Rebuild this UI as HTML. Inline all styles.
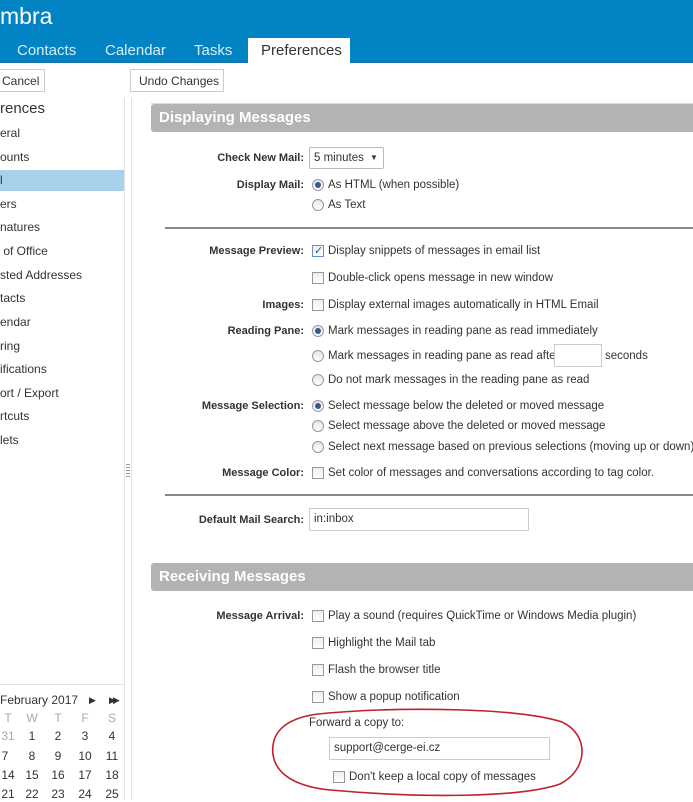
<!DOCTYPE html>
<html><head><meta charset="utf-8"><style>
*{margin:0;padding:0;box-sizing:border-box}
body{width:693px;height:800px;overflow:hidden;background:#fff;font-family:"Liberation Sans","DejaVu Sans",sans-serif;font-size:11.5px;color:#333;position:relative}
.a{position:absolute;white-space:nowrap;line-height:16px}
.lbl{position:absolute;right:389px;font-weight:bold;font-size:11px;line-height:16px;white-space:nowrap;color:#333}
.cb{position:absolute;width:12px;height:12px;border:1px solid #999;background:linear-gradient(#eee,#fff)}
.rb{position:absolute;width:12px;height:12px;border:1px solid #999;border-radius:50%;background:linear-gradient(#e6e6e6,#fff)}
.rb.on::after{content:"";position:absolute;left:2px;top:2px;width:6px;height:6px;border-radius:50%;background:#2a5d9a}
.nav{position:absolute;left:0;line-height:16px;font-size:12px;color:#333}
.sec{position:absolute;left:151px;width:560px;height:28px;background:#b3b3b3;border-radius:3px;color:#fff;font-weight:bold;font-size:15px;line-height:28px;padding-left:8px}
.inp{position:absolute;border:1px solid #ccc;background:#fff;height:23px;line-height:21px;padding-left:4px}
.cal{position:absolute;font-size:12px;width:20px;text-align:center}
</style></head><body>
<div style="position:absolute;left:0;top:0;width:693px;height:63px;background:#0284c4;border-bottom:2px solid #1a74aa"></div>
<div class="a" style="left:0;top:2px;font-size:23px;line-height:28px;color:#fff">mbra</div>
<div class="a" style="left:17px;top:43px;font-size:15px;color:#d6ecf8">Contacts</div>
<div class="a" style="left:105px;top:43px;font-size:15px;color:#d6ecf8">Calendar</div>
<div class="a" style="left:194px;top:43px;font-size:15px;color:#d6ecf8">Tasks</div>
<div style="position:absolute;left:248px;top:38px;width:102px;height:27px;background:#fff"></div>
<div class="a" style="left:261px;top:43px;font-size:15px;color:#333">Preferences</div>
<div style="position:absolute;left:-5px;top:69px;width:50px;height:23px;border:1px solid #ccc;background:#fff"></div>
<div class="a" style="left:2px;top:73px;font-size:12px">Cancel</div>
<div style="position:absolute;left:130px;top:69px;width:94px;height:23px;border:1px solid #ccc;background:#fff"></div>
<div class="a" style="left:139px;top:73px;font-size:12px">Undo Changes</div>
<div style="position:absolute;left:124px;top:98px;width:1px;height:702px;background:#e2e2e2"></div>
<div style="position:absolute;left:131px;top:98px;width:1px;height:702px;background:#e2e2e2"></div>
<div style="position:absolute;left:126px;top:464px;width:4px;height:14px;background:repeating-linear-gradient(#999 0 1px,transparent 1px 3px)"></div>
<div class="nav" style="top:101px;font-size:15px">rences</div>
<div class="nav" style="top:125px">eral</div>
<div class="nav" style="top:149px">ounts</div>
<div style="position:absolute;left:0;top:170px;width:124px;height:21px;background:#a7d2ea"></div>
<div class="nav" style="top:172px">l</div>
<div class="nav" style="top:196px">ers</div>
<div class="nav" style="top:219px">natures</div>
<div class="nav" style="top:243px">&nbsp;of Office</div>
<div class="nav" style="top:267px">sted Addresses</div>
<div class="nav" style="top:290px">tacts</div>
<div class="nav" style="top:314px">endar</div>
<div class="nav" style="top:338px">ring</div>
<div class="nav" style="top:361px">ifications</div>
<div class="nav" style="top:385px">ort / Export</div>
<div class="nav" style="top:408px">rtcuts</div>
<div class="nav" style="top:432px">lets</div>
<div style="position:absolute;left:0;top:684px;width:124px;height:1px;background:#e2e2e2"></div>
<div class="a" style="left:0;top:692px;font-size:12px">February 2017</div>
<div class="a" style="left:89px;top:692px;font-size:9px">&#9654;</div>
<div class="a" style="left:109px;top:692px;font-size:9px;letter-spacing:-3px">&#9654;&#9654;</div>
<div class="cal a" style="left:-2px;top:710px;color:#aaa">T</div><div class="cal a" style="left:22px;top:710px;color:#aaa">W</div><div class="cal a" style="left:48px;top:710px;color:#aaa">T</div><div class="cal a" style="left:75px;top:710px;color:#aaa">F</div><div class="cal a" style="left:102px;top:710px;color:#aaa">S</div>
<div class="cal a" style="left:-2px;top:728px;color:#aaa">31</div><div class="cal a" style="left:22px;top:728px">1</div><div class="cal a" style="left:48px;top:728px">2</div><div class="cal a" style="left:75px;top:728px">3</div><div class="cal a" style="left:102px;top:728px">4</div>
<div class="cal a" style="left:-5px;top:748px">7</div><div class="cal a" style="left:22px;top:748px">8</div><div class="cal a" style="left:48px;top:748px">9</div><div class="cal a" style="left:75px;top:748px">10</div><div class="cal a" style="left:102px;top:748px">11</div>
<div class="cal a" style="left:-2px;top:767px">14</div><div class="cal a" style="left:22px;top:767px">15</div><div class="cal a" style="left:48px;top:767px">16</div><div class="cal a" style="left:75px;top:767px">17</div><div class="cal a" style="left:102px;top:767px">18</div>
<div class="cal a" style="left:-2px;top:786px">21</div><div class="cal a" style="left:22px;top:786px">22</div><div class="cal a" style="left:48px;top:786px">23</div><div class="cal a" style="left:75px;top:786px">24</div><div class="cal a" style="left:102px;top:786px">25</div>

<div style="position:absolute;left:151px;top:103px;width:560px;height:1px;background:#ddd"></div>
<div class="sec" style="top:104px">Displaying Messages</div>
<div class="lbl" style="top:150px">Check New Mail:</div>
<div style="position:absolute;left:309px;top:147px;width:75px;height:22px;border:1px solid #bbb;border-radius:2px;background:#fff"></div>
<div class="a" style="left:314px;top:150px">5 minutes</div>
<div class="a" style="left:370px;top:150px;font-size:8px">&#9660;</div>
<div class="lbl" style="top:177px">Display Mail:</div>
<div class="rb on" style="left:312px;top:179px"></div><div class="a" style="left:328px;top:177px">As HTML (when possible)</div>
<div class="rb" style="left:312px;top:199px"></div><div class="a" style="left:328px;top:197px">As Text</div>
<div style="position:absolute;left:165px;top:227px;width:528px;height:2px;background:#888"></div>
<div class="lbl" style="top:243px">Message Preview:</div>
<div class="cb" style="left:312px;top:245px;border-color:#6a8fc0"></div><div class="a" style="left:314px;top:243px;color:#2a5d9a;font-size:11px">&#10003;</div><div class="a" style="left:328px;top:243px">Display snippets of messages in email list</div>
<div class="cb" style="left:312px;top:272px"></div><div class="a" style="left:328px;top:270px">Double-click opens message in new window</div>
<div class="lbl" style="top:297px">Images:</div>
<div class="cb" style="left:312px;top:299px"></div><div class="a" style="left:328px;top:297px">Display external images automatically in HTML Email</div>
<div class="lbl" style="top:323px">Reading Pane:</div>
<div class="rb on" style="left:312px;top:325px"></div><div class="a" style="left:328px;top:323px">Mark messages in reading pane as read immediately</div>
<div class="rb" style="left:312px;top:350px"></div><div class="a" style="left:328px;top:348px">Mark messages in reading pane as read after</div>
<div class="inp" style="left:554px;top:344px;width:48px"></div><div class="a" style="left:605px;top:348px">seconds</div>
<div class="rb" style="left:312px;top:374px"></div><div class="a" style="left:328px;top:372px">Do not mark messages in the reading pane as read</div>
<div class="lbl" style="top:398px">Message Selection:</div>
<div class="rb on" style="left:312px;top:400px"></div><div class="a" style="left:328px;top:398px">Select message below the deleted or moved message</div>
<div class="rb" style="left:312px;top:420px"></div><div class="a" style="left:328px;top:418px">Select message above the deleted or moved message</div>
<div class="rb" style="left:312px;top:441px"></div><div class="a" style="left:328px;top:439px">Select next message based on previous selections (moving up or down)</div>
<div class="lbl" style="top:465px">Message Color:</div>
<div class="cb" style="left:312px;top:467px"></div><div class="a" style="left:328px;top:465px">Set color of messages and conversations according to tag color.</div>
<div style="position:absolute;left:165px;top:494px;width:528px;height:2px;background:#888"></div>
<div class="lbl" style="top:512px">Default Mail Search:</div>
<div class="inp" style="left:309px;top:508px;width:220px">in:inbox</div>
<div class="sec" style="top:563px">Receiving Messages</div>
<div class="lbl" style="top:608px">Message Arrival:</div>
<div class="cb" style="left:312px;top:610px"></div><div class="a" style="left:328px;top:608px">Play a sound (requires QuickTime or Windows Media plugin)</div>
<div class="cb" style="left:312px;top:637px"></div><div class="a" style="left:328px;top:635px">Highlight the Mail tab</div>
<div class="cb" style="left:312px;top:664px"></div><div class="a" style="left:328px;top:662px">Flash the browser title</div>
<div class="cb" style="left:312px;top:691px"></div><div class="a" style="left:328px;top:689px">Show a popup notification</div>
<div class="a" style="left:309px;top:715px">Forward a copy to:</div>
<div class="inp" style="left:329px;top:737px;width:221px;line-height:21px">support@cerge-ei.cz</div>
<div class="cb" style="left:333px;top:771px"></div><div class="a" style="left:349px;top:769px">Don't keep a local copy of messages</div>
<svg style="position:absolute;left:0;top:0" width="693" height="800"><path d="M318 714 C400 706 520 708 562 722 C590 735 588 770 560 784 C520 798 420 798 330 790 C290 786 270 770 273 745 C276 725 295 717 318 714" fill="none" stroke="#c0202a" stroke-width="1.6"/></svg>
</body></html>
